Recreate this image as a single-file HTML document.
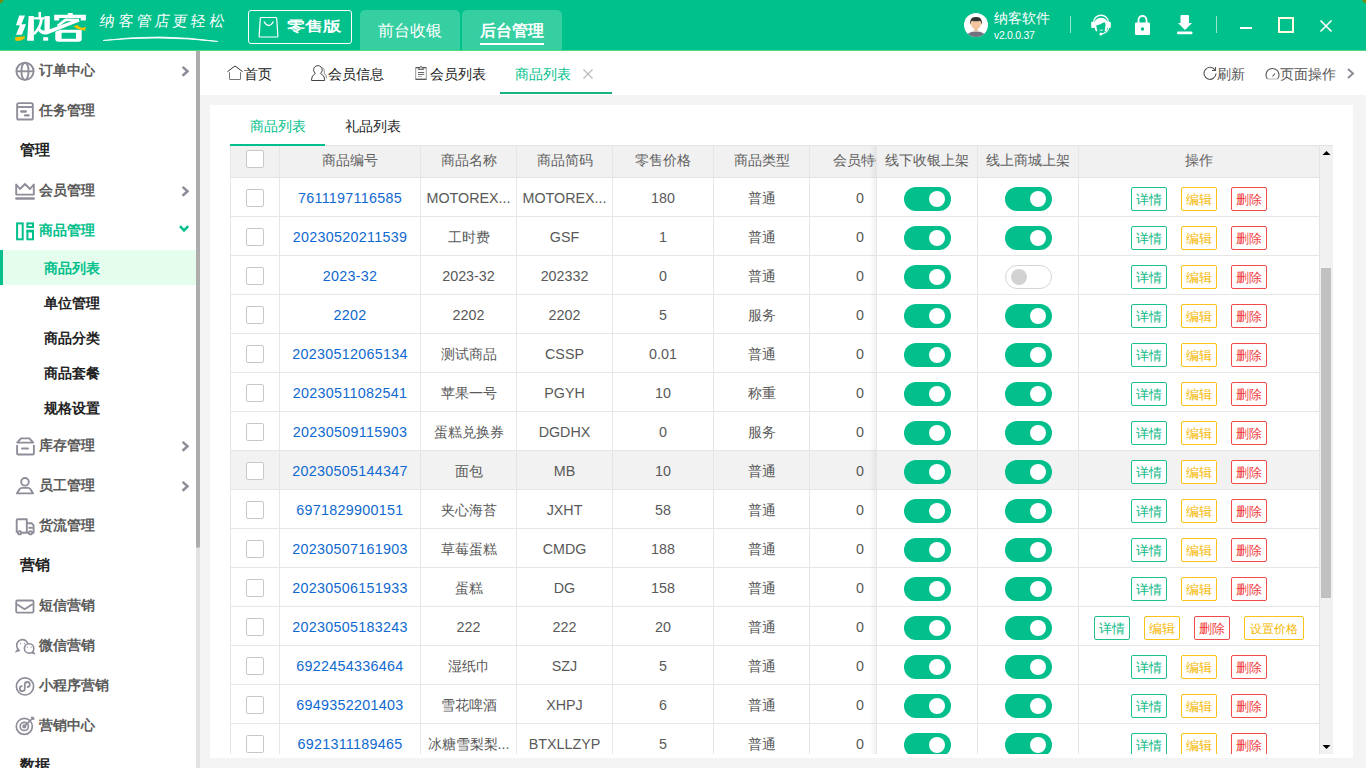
<!DOCTYPE html><html><head><meta charset="utf-8"><style>
*{box-sizing:border-box;margin:0;padding:0}
html,body{width:1366px;height:768px;overflow:hidden;background:#f4f4f4;font-family:"Liberation Sans",sans-serif;}
.abs{position:absolute}
#hdr{position:absolute;left:0;top:0;width:1366px;height:51px;background:#00c08b;border-bottom:1px solid #4ddb7e}
.ttab{position:absolute;top:10px;height:40px;width:100px;background:#35cfa1;border-radius:5px 5px 0 0;color:#fff;font-size:16px;text-align:center;line-height:42px}
#side{position:absolute;left:0;top:51px;width:196px;height:717px;background:#fff;overflow:hidden}
.mi{position:absolute;left:0;width:196px;height:40px;font-size:14px;font-weight:bold;color:#5b5b5b}
.mi .t{position:absolute;left:39px;top:0;line-height:40px}
.mi svg{position:absolute;left:15px;top:11px}
.mi .chev{position:absolute;left:179px;top:16px}
.gh{position:absolute;left:20px;width:100px;height:40px;line-height:40px;font-size:15px;font-weight:bold;color:#222}
.si{position:absolute;left:0;width:196px;height:35px;line-height:37px;font-size:14px;font-weight:bold;color:#222;padding-left:44px}
#tabbar{position:absolute;left:200px;top:51px;width:1166px;height:44px;background:#fff}
.pt{position:absolute;top:0;height:44px;line-height:46px;font-size:14px;color:#222}
#card{position:absolute;left:210px;top:105px;width:1143px;height:653px;background:#fff}
.cell{position:absolute;text-align:center;font-size:14.3px;color:#595959;white-space:nowrap;overflow:hidden}
.btn{position:absolute;height:24px;line-height:24px;font-size:12.5px;text-align:center;border:1px solid;border-radius:2px;background:#fff}
.sw{position:absolute;width:47px;height:24px;border-radius:12px;background:#02bf8b}
.sw i{position:absolute;top:4px;left:25px;width:16px;height:16px;border-radius:8px;background:#fff}
.sw.off{background:#fff;border:1px solid #d6d6d6}
.sw.off i{left:5px;top:3px;background:#d2d2d2}
.cb{position:absolute;width:18px;height:18px;border:1px solid #c8c8c8;border-radius:2px;background:#fff}
</style></head><body>

<div id="hdr">
<svg class="abs" style="left:0;top:0" width="100" height="48" viewBox="0 0 100 48">
<g fill="#fff">
<polygon points="19.2,15.4 25,15.4 21.4,24.3 26,24.3 21.9,34.7 16,34.7 19.9,25.3 16,25.3"/>
<polygon points="28.6,16.1 33.9,16.1 33.9,40.7 27.1,40.7"/>
<rect x="33.9" y="17.2" width="10.8" height="2.2"/>
<rect x="38.5" y="12" width="2.5" height="7.4"/>
<path d="M41.4,19 Q41,27.5 33.9,34" fill="none" stroke="#fff" stroke-width="2.8"/>
<rect x="44.5" y="16.1" width="5.3" height="15"/>
<rect x="43.2" y="37.2" width="5" height="3.5"/>
<path d="M37.6,29.4 Q41,35.8 47.5,34.2 L79.6,21.6 L78.6,18.6 L46.5,30.4 Q42.2,31.6 39.8,28 Z"/>
<path d="M56.8,25 L65,18.6 L79,18.8 L78.6,21.2 L66.2,21.2 L58.4,26.8 Z"/>

<rect x="67.8" y="13" width="5" height="2"/>
<path d="M54.2,14.7 H85.9 V20.4 H80.7 V17.9 H59.2 V20.4 H54.2 Z"/>
<path d="M55.3,31.8 L60.5,29.8 H81.7 V39 Q81.7,41.7 78.5,41.7 H58.5 Q55.3,41.7 55.3,39 Z M61.6,32.75 V38.7 H76 V32.75 Z" fill-rule="evenodd"/>
</g>
<g fill="#f6c000">
<path d="M15,37.2 L25.1,36.2 L24.6,38.2 Q22,40.2 19.9,40.7 L15.5,40.7 Z"/>
<path d="M73.8,26.3 Q76,25 77.7,25.3 Q80,27.6 81.7,27.8 L85.9,27.1 L85.1,30.8 L80.7,29.8 Q77,28.8 74.8,27.6 Z"/>
</g>
</svg>
<div class="abs" style="left:100px;top:12px;font-family:'Liberation Serif',serif;font-size:15px;color:#fff;letter-spacing:3.2px;transform:skewX(-8deg);white-space:nowrap">纳客管店更轻松</div>
<svg class="abs" style="left:100px;top:33px" width="125" height="12"><path d="M3,7.5 Q60,0 118,8.5 Q60,2 3,7.5z" fill="#fff" stroke="#fff" stroke-width="0.8"/></svg>
<div class="abs" style="left:248px;top:10px;width:104px;height:34px;border:1px solid #fff;border-radius:3px"></div>
<svg class="abs" style="left:258px;top:16px" width="22" height="22" viewBox="0 0 22 22"><path d="M3.2,1.5 h14.6 q0.8,0 0.9,0.8 l1.2,18 q0,0.7 -0.7,0.7 h-17.4 q-0.7,0 -0.7,-0.7 l1.2,-18 q0.1,-0.8 0.9,-0.8z" fill="none" stroke="#fff" stroke-width="1.2"/><path d="M6,5.5 q4.5,8 9.5,0" fill="none" stroke="#fff" stroke-width="1.3"/></svg>
<div class="abs" style="left:287px;top:15px;font-size:17px;font-weight:bold;color:#fff;line-height:24px;white-space:nowrap;transform:scale(1.045,0.8);transform-origin:0 50%">零售版</div>
<div class="ttab" style="left:360px">前台收银</div>
<div class="ttab" style="left:462px;font-weight:bold">后台管理<div class="abs" style="left:18px;top:33px;width:64px;height:2px;background:#fff"></div></div>
<svg class="abs" style="left:964px;top:13px" width="24" height="24" viewBox="0 0 24 24">
<circle cx="12" cy="12" r="12" fill="#fff"/>
<clipPath id="avc"><circle cx="12" cy="12" r="12"/></clipPath>
<g clip-path="url(#avc)">
<path d="M1.5,24.5 q1.5,-6 10.5,-6 q9,0 10.5,6z" fill="#72717f"/>
<rect x="10" y="14" width="4" height="4" fill="#f0c29a"/>
<ellipse cx="12" cy="10.5" rx="5" ry="5.5" fill="#f3c69f"/>
<path d="M6.3,12 q-1.2,-8.5 5.7,-8 q6.9,-0.5 5.7,8 q-0.6,-3.5 -1.6,-4.3 q-4,1 -8.3,0 q-1,1 -1.5,4.3z" fill="#333"/>
</g></svg>
<div class="abs" style="left:994px;top:9px;font-size:14px;color:#fff;line-height:18px;white-space:nowrap">纳客软件</div>
<div class="abs" style="left:994px;top:28px;font-size:10.5px;font-weight:normal;color:#fff;line-height:14px;white-space:nowrap;letter-spacing:-0.3px">v2.0.0.37</div>
<div class="abs" style="left:1070px;top:16px;width:1px;height:17px;background:rgba(255,255,255,.6)"></div>
<div class="abs" style="left:1216px;top:16px;width:1px;height:17px;background:rgba(255,255,255,.6)"></div>
<svg class="abs" style="left:1088px;top:11px" width="26" height="26" viewBox="0 0 26 26">
<path d="M5.6,11.6 A7.4,7.4 0 0 1 20.4,11.6" fill="none" stroke="#fff" stroke-width="1.4"/>
<path d="M6,14 Q6.2,7 13,6.8 Q19.8,7 20,14 L18.6,19.8 Q17.6,20.8 16.6,20.4 L17.6,13.6 Q17,11 16,11.2 Q12.5,13.6 8.2,14.4 L9.4,20.6 Q8,20.6 7.3,19.2 Z" fill="#fff"/>
<rect x="3.2" y="10.8" width="3.8" height="6.2" rx="1" fill="#fff"/>
<rect x="19" y="10.8" width="3.8" height="6.2" rx="1" fill="#fff"/>
<path d="M20.8,16.5 Q20,22 13,23" fill="none" stroke="#fff" stroke-width="1.2"/>
<circle cx="12.9" cy="23" r="1.5" fill="#fff"/>
<path d="M11.4,19 Q13,19.7 15,19" fill="none" stroke="#fff" stroke-width="0.8"/>
</svg>
<svg class="abs" style="left:1134px;top:15px" width="17" height="21" viewBox="0 0 17 21">
<path d="M4.5,8 v-3 a4,4 0 0 1 8,0 v3" fill="none" stroke="#fff" stroke-width="1.8"/>
<rect x="1" y="7.5" width="15" height="12.5" rx="1.2" fill="#fff"/>
<circle cx="8.5" cy="14" r="1.7" fill="#02bf8b"/>
</svg>
<svg class="abs" style="left:1177px;top:15px" width="16" height="20" viewBox="0 0 16 20">
<rect x="3.5" y="0" width="8.5" height="9" rx="1" fill="#fff"/>
<polygon points="1,8 15,8 8,15" fill="#fff"/>
<rect x="0" y="16.5" width="15.5" height="2.8" rx="1.2" fill="#fff"/>
</svg>
<div class="abs" style="left:1240px;top:27px;width:12px;height:2px;background:#fff"></div>
<div class="abs" style="left:1278px;top:17px;width:16px;height:16px;border:2px solid #fffbe0"></div>
<svg class="abs" style="left:1319px;top:19px" width="14" height="14"><path d="M1.5,1.5 L12.5,12.5 M12.5,1.5 L1.5,12.5" stroke="#fff" stroke-width="1.6"/></svg>
<svg class="abs" style="left:0;top:0" width="5" height="5"><polygon points="0,0 4,0 0,4" fill="#7a8a04"/></svg>
<svg class="abs" style="left:1361px;top:0" width="5" height="5"><polygon points="1,0 5,0 5,4" fill="#7a8a04"/></svg>
</div>
<div id="side">
<div class="mi" style="top:-1px"><span class="t">订单中心</span><svg width="20" height="20" viewBox="0 0 20 20" fill="none" stroke="#8e8e9a" stroke-width="1.9"><circle cx="10" cy="10.3" r="8.6"/><ellipse cx="10" cy="10.3" rx="3.6" ry="8.6"/><path d="M1.4,10.3 h17.2"/></svg><svg class="chev" width="12" height="12" viewBox="0 0 12 12"><path d="M3.6,0.9 L8.5,5.3 L3.6,9.7" fill="none" stroke="#8e8e9a" stroke-width="2.5"/></svg></div>
<div class="mi" style="top:39px"><span class="t">任务管理</span><svg width="20" height="20" viewBox="0 0 20 20" fill="none" stroke="#8e8e9a" stroke-width="1.9"><rect x="2.15" y="2.15" width="15.7" height="16.4" rx="1.6"/><path d="M2.15,6 h15.7"/><path d="M6.2,10.5 h4.6" stroke-linecap="round" stroke-width="2.3"/><path d="M10.1,14.4 h3.6" stroke-linecap="round" stroke-width="2.3"/></svg></div>
<div class="gh" style="top:79px">管理</div>
<div class="mi" style="top:119px"><span class="t">会员管理</span><svg width="21" height="20" viewBox="0 0 21 20" fill="none" stroke="#8e8e9a" stroke-width="1.9" stroke-linejoin="round"><path d="M1.2,3.5 L5,8 L10,3 L15,8 L18.8,3.5 V13.6 H1.2 Z"/><path d="M1.4,17.5 h17.4" stroke-width="2.4" stroke-linecap="round"/></svg><svg class="chev" width="12" height="12" viewBox="0 0 12 12"><path d="M3.6,0.9 L8.5,5.3 L3.6,9.7" fill="none" stroke="#8e8e9a" stroke-width="2.5"/></svg></div>
<div class="mi" style="top:159px"><span class="t" style="color:#02bf8b">商品管理</span><svg width="20" height="20" viewBox="0 0 20 20" fill="none" stroke="#02bf8b" stroke-width="2"><rect x="2.1" y="2.4" width="5.6" height="15.9"/><rect x="12.4" y="2.4" width="5.6" height="3.6"/><rect x="12.4" y="10.2" width="5.6" height="8.1"/><path d="M11.4,10 h7.6" stroke-width="2.6"/></svg><svg class="chev" style="left:178px;top:14px" width="12" height="10" viewBox="0 0 12 10"><path d="M2,2.2 L6,6.4 L10.2,2.2" fill="none" stroke="#02bf8b" stroke-width="2.5"/></svg></div>
<div class="si" style="top:199px;background:#e5fdec;color:#02bf8b"><div class="abs" style="left:0;top:0;width:3px;height:35px;background:#02bf8b"></div>商品列表</div>
<div class="si" style="top:234px">单位管理</div>
<div class="si" style="top:269px">商品分类</div>
<div class="si" style="top:304px">商品套餐</div>
<div class="si" style="top:339px">规格设置</div>
<div class="mi" style="top:374px"><span class="t">库存管理</span><svg width="20" height="20" viewBox="0 0 20 20" fill="none" stroke="#8e8e9a" stroke-width="1.9" stroke-linejoin="round"><path d="M2.2,6.6 L6,2.4 H14.4 L18.2,6.6 Z"/><path d="M2.1,9 V17.4 Q2.1,18.5 3.2,18.5 H17.8 Q18.9,18.5 18.9,17.4 V9"/><path d="M7.1,12.5 H12.9" stroke-linecap="round" stroke-width="2.2"/></svg><svg class="chev" width="12" height="12" viewBox="0 0 12 12"><path d="M3.6,0.9 L8.5,5.3 L3.6,9.7" fill="none" stroke="#8e8e9a" stroke-width="2.5"/></svg></div>
<div class="mi" style="top:414px"><span class="t">员工管理</span><svg width="20" height="20" viewBox="0 0 20 20" fill="none" stroke="#8e8e9a" stroke-width="1.9" stroke-linejoin="round"><circle cx="10" cy="5.8" r="3.8"/><path d="M1.9,17.4 L4.5,13.2 Q5.4,11.9 7,11.9 H13 Q14.6,11.9 15.5,13.2 L18.1,17.4 Z"/></svg><svg class="chev" width="12" height="12" viewBox="0 0 12 12"><path d="M3.6,0.9 L8.5,5.3 L3.6,9.7" fill="none" stroke="#8e8e9a" stroke-width="2.5"/></svg></div>
<div class="mi" style="top:454px"><span class="t">货流管理</span><svg width="21" height="20" viewBox="0 0 21 20" fill="none" stroke="#8e8e9a" stroke-width="1.9" stroke-linejoin="round"><path d="M1.7,16.7 V4.2 Q1.7,3.2 2.7,3.2 H11.8 V16.7 H2.6 M6.4,16.7 H13.7 M17.3,16.7 H18.6 V9.3 L16.8,7.3 H11.8"/><path d="M13.4,11.8 H17.8"/><circle cx="4.6" cy="16.7" r="1.6" fill="#fff"/><circle cx="15.5" cy="16.7" r="1.6" fill="#fff"/></svg></div>
<div class="gh" style="top:494px">营销</div>
<div class="mi" style="top:534px"><span class="t">短信营销</span><svg width="20" height="20" viewBox="0 0 20 20" fill="none" stroke="#8e8e9a" stroke-width="1.8" stroke-linejoin="round"><rect x="1.2" y="4.5" width="17.3" height="12.2" rx="1.2"/><path d="M1.5,8 L9.6,13.2 L17.8,8"/></svg></div>
<div class="mi" style="top:574px"><span class="t">微信营销</span><svg width="21" height="20" viewBox="0 0 21 20" fill="none" stroke="#8e8e9a" stroke-width="1.6"><path d="M3.2,13.2 A5.7,5.7 0 1 1 11.2,13.6" /><path d="M3.4,12.8 L1.6,15.2 L5,14.2"/><circle cx="14.1" cy="12.4" r="4.7" fill="#fff"/><path d="M17.8,15.2 L19,17.4 L16.2,16.6"/><path d="M5.2,7.5 h0.9 M9.1,7.5 h0.9 M11.8,11.2 h0.9 M15.7,11.2 h0.9" stroke-width="1.3"/></svg></div>
<div class="mi" style="top:614px"><span class="t">小程序营销</span><svg width="20" height="20" viewBox="0 0 20 20" fill="none" stroke="#8e8e9a" stroke-width="1.7"><circle cx="10" cy="10.4" r="8.6"/><path d="M6.8,10.2 A2.5,2.5 0 1 0 9.8,12.4 V8.6 A2.5,2.5 0 1 1 12.6,11" stroke-width="1.8" stroke-linecap="round"/></svg></div>
<div class="mi" style="top:654px"><span class="t">营销中心</span><svg width="21" height="20" viewBox="0 0 21 20" fill="none" stroke="#8e8e9a" stroke-width="1.7"><circle cx="9.3" cy="10.4" r="8"/><circle cx="9.3" cy="10.4" r="4.1"/><circle cx="9.3" cy="10.4" r="1.2" fill="#8e8e9a"/><path d="M9.3,10.4 L17,2.8"/><path d="M16.4,1 L18.4,1.2 L19.2,3.2 L17.2,3.4 Z" fill="#8e8e9a" stroke-width="1"/></svg></div>
<div class="gh" style="top:694px">数据</div>
</div>
<div class="abs" style="left:196px;top:51px;width:4px;height:717px;background:#e3e3e3"></div>
<div class="abs" style="left:196px;top:51px;width:4px;height:497px;background:#adadad;border-radius:0 0 2px 2px"></div>
<div id="tabbar">
<svg class="abs" style="left:27px;top:14px" width="17" height="16" viewBox="0 0 17 16" fill="none" stroke-width="1"><path d="M0.5,6.6 L8,1 L15.6,6.6" stroke="#333"/><path d="M2.5,7.2 V14 Q2.5,14.5 3,14.5 H13 Q13.5,14.5 13.5,14 V7.2" stroke="#777"/></svg>
<div class="pt" style="left:44px;color:#222">首页</div>
<svg class="abs" style="left:111px;top:14px" width="17" height="17" viewBox="0 0 17 17" fill="none" stroke="#444" stroke-width="1"><path d="M4.4,8.4 A4.3,4.3 0 1 1 9.4,8.4 Q13.6,10.5 13.6,14 V15.5 H0.6 V14 Q0.6,10.5 4.4,8.4 Z"/><path d="M10.6,2.2 Q14,4 13.2,8.2 Q15.5,10 15.6,13.4" stroke="#888"/></svg>
<div class="pt" style="left:128px;color:#222">会员信息</div>
<svg class="abs" style="left:214px;top:15px" width="14" height="15" viewBox="0 0 14 15" fill="none" stroke="#555" stroke-width="1"><path d="M1.7,1.7 H12.3 V13.2 H1.7 Z" stroke="#999"/><path d="M1.7,1.7 H12.3 M1.5,13.3 H12.5" stroke="#444"/><path d="M4.3,3.4 L6.2,0.7 H7.8 L9.6,3.4 Z" fill="#ddd" stroke="#555"/><path d="M4,6.5 h6.2 M4,8.4 h6.2" stroke="#666"/><path d="M4,10.4 h3.8" stroke="#aaa"/></svg>
<div class="pt" style="left:230px;color:#222">会员列表</div>
<div class="pt" style="left:315px;color:#02bf8b">商品列表</div>
<svg class="abs" style="left:383px;top:18px" width="10" height="10"><path d="M0.5,0.5 L9.5,9.5 M9.5,0.5 L0.5,9.5" stroke="#bbb" stroke-width="1.2"/></svg>
<div class="abs" style="left:300px;top:41px;width:112px;height:2px;background:#19b47b"></div>
<svg class="abs" style="left:1003px;top:15px" width="14" height="14" viewBox="0 0 14 14" fill="none" stroke="#555" stroke-width="1.1"><path d="M12,4 A6,6 0 1 0 13,7.5"/><path d="M12.5,1 V4.5 H9"/></svg>
<div class="pt" style="left:1017px;color:#555">刷新</div>
<svg class="abs" style="left:1065px;top:16px" width="15" height="14" viewBox="0 0 15 14" fill="none" stroke="#555" stroke-width="1.1"><path d="M2.4,12 A6.5,6.5 0 1 1 12.6,12" /><path d="M2.4,12 H12.6" stroke="#bbb"/><path d="M7.5,9.5 L10,6.5"/></svg>
<div class="pt" style="left:1080px;color:#555">页面操作</div>
<svg class="abs" style="left:1146px;top:17px" width="10" height="11" viewBox="0 0 10 11"><path d="M2,1 L7,5.5 L2,10" fill="none" stroke="#8e8e9a" stroke-width="2"/></svg>
</div>
<div id="card"></div>
<div class="abs" style="left:250px;top:116px;font-size:14px;color:#02bf8b;line-height:20px">商品列表</div>
<div class="abs" style="left:345px;top:116px;font-size:14px;color:#222;line-height:20px">礼品列表</div>
<div class="abs" style="left:230px;top:145px;width:1103px;height:1px;background:#e4e4e4"></div>
<div class="abs" style="left:230px;top:144px;width:95px;height:2px;background:#02bf8b"></div>
<div class="abs" style="left:230px;top:146px;width:1089px;height:608px;overflow:hidden;background:#fff">
<div class="abs" style="left:0;top:0;width:1089px;height:32px;background:#f1f1f1;border-bottom:1px solid #e3e3e3"></div>
<div class="abs" style="left:0;top:70px;width:1089px;height:1px;background:#e6e6e6"></div>
<div class="abs" style="left:0;top:109px;width:1089px;height:1px;background:#e6e6e6"></div>
<div class="abs" style="left:0;top:148px;width:1089px;height:1px;background:#e6e6e6"></div>
<div class="abs" style="left:0;top:187px;width:1089px;height:1px;background:#e6e6e6"></div>
<div class="abs" style="left:0;top:226px;width:1089px;height:1px;background:#e6e6e6"></div>
<div class="abs" style="left:0;top:265px;width:1089px;height:1px;background:#e6e6e6"></div>
<div class="abs" style="left:0;top:304px;width:1089px;height:1px;background:#e6e6e6"></div>
<div class="abs" style="left:0;top:343px;width:1089px;height:1px;background:#e6e6e6"></div>
<div class="abs" style="left:0;top:382px;width:1089px;height:1px;background:#e6e6e6"></div>
<div class="abs" style="left:0;top:421px;width:1089px;height:1px;background:#e6e6e6"></div>
<div class="abs" style="left:0;top:460px;width:1089px;height:1px;background:#e6e6e6"></div>
<div class="abs" style="left:0;top:499px;width:1089px;height:1px;background:#e6e6e6"></div>
<div class="abs" style="left:0;top:538px;width:1089px;height:1px;background:#e6e6e6"></div>
<div class="abs" style="left:0;top:577px;width:1089px;height:1px;background:#e6e6e6"></div>
<div class="abs" style="left:0;top:616px;width:1089px;height:1px;background:#e6e6e6"></div>
<div class="abs" style="left:0;top:305px;width:1089px;height:38px;background:#f2f2f2"></div>
<div class="abs" style="left:0px;top:0;width:1px;height:608px;background:#e6e6e6"></div>
<div class="abs" style="left:49px;top:0;width:1px;height:608px;background:#e6e6e6"></div>
<div class="abs" style="left:190px;top:0;width:1px;height:608px;background:#e6e6e6"></div>
<div class="abs" style="left:286px;top:0;width:1px;height:608px;background:#e6e6e6"></div>
<div class="abs" style="left:382px;top:0;width:1px;height:608px;background:#e6e6e6"></div>
<div class="abs" style="left:483px;top:0;width:1px;height:608px;background:#e6e6e6"></div>
<div class="abs" style="left:579px;top:0;width:1px;height:608px;background:#e6e6e6"></div>
<div class="abs" style="left:646px;top:0;width:1px;height:608px;background:#e6e6e6"></div>
<div class="abs" style="left:747px;top:0;width:1px;height:608px;background:#e6e6e6"></div>
<div class="abs" style="left:848px;top:0;width:1px;height:608px;background:#e6e6e6"></div>
<div class="cb" style="left:16px;top:4px"></div>
<div class="cell" style="left:50px;top:0;width:140px;line-height:29px;color:#606060">商品编号</div>
<div class="cell" style="left:191px;top:0;width:95px;line-height:29px;color:#606060">商品名称</div>
<div class="cell" style="left:287px;top:0;width:95px;line-height:29px;color:#606060">商品简码</div>
<div class="cell" style="left:383px;top:0;width:100px;line-height:29px;color:#606060">零售价格</div>
<div class="cell" style="left:484px;top:0;width:95px;line-height:29px;color:#606060">商品类型</div>
<div class="cell" style="left:603px;top:0;width:70px;line-height:29px;color:#606060;text-align:left">会员特价</div>
<div class="cb" style="left:16px;top:43px"></div>
<div class="cell" style="left:50px;top:32px;width:140px;line-height:40px;color:#0f69d0;letter-spacing:0.3px;">7611197116585</div>
<div class="cell" style="left:191px;top:32px;width:95px;line-height:40px;color:#595959;">MOTOREX...</div>
<div class="cell" style="left:287px;top:32px;width:95px;line-height:40px;color:#595959;">MOTOREX...</div>
<div class="cell" style="left:383px;top:32px;width:100px;line-height:40px;color:#595959;">180</div>
<div class="cell" style="left:484px;top:32px;width:95px;line-height:40px;color:#595959;">普通</div>
<div class="cell" style="left:614px;top:32px;width:20px;line-height:40px;text-align:right">0</div>
<div class="cb" style="left:16px;top:82px"></div>
<div class="cell" style="left:50px;top:71px;width:140px;line-height:40px;color:#0f69d0;letter-spacing:0.3px;">20230520211539</div>
<div class="cell" style="left:191px;top:71px;width:95px;line-height:40px;color:#595959;">工时费</div>
<div class="cell" style="left:287px;top:71px;width:95px;line-height:40px;color:#595959;">GSF</div>
<div class="cell" style="left:383px;top:71px;width:100px;line-height:40px;color:#595959;">1</div>
<div class="cell" style="left:484px;top:71px;width:95px;line-height:40px;color:#595959;">普通</div>
<div class="cell" style="left:614px;top:71px;width:20px;line-height:40px;text-align:right">0</div>
<div class="cb" style="left:16px;top:121px"></div>
<div class="cell" style="left:50px;top:110px;width:140px;line-height:40px;color:#0f69d0;letter-spacing:0.3px;">2023-32</div>
<div class="cell" style="left:191px;top:110px;width:95px;line-height:40px;color:#595959;">2023-32</div>
<div class="cell" style="left:287px;top:110px;width:95px;line-height:40px;color:#595959;">202332</div>
<div class="cell" style="left:383px;top:110px;width:100px;line-height:40px;color:#595959;">0</div>
<div class="cell" style="left:484px;top:110px;width:95px;line-height:40px;color:#595959;">普通</div>
<div class="cell" style="left:614px;top:110px;width:20px;line-height:40px;text-align:right">0</div>
<div class="cb" style="left:16px;top:160px"></div>
<div class="cell" style="left:50px;top:149px;width:140px;line-height:40px;color:#0f69d0;letter-spacing:0.3px;">2202</div>
<div class="cell" style="left:191px;top:149px;width:95px;line-height:40px;color:#595959;">2202</div>
<div class="cell" style="left:287px;top:149px;width:95px;line-height:40px;color:#595959;">2202</div>
<div class="cell" style="left:383px;top:149px;width:100px;line-height:40px;color:#595959;">5</div>
<div class="cell" style="left:484px;top:149px;width:95px;line-height:40px;color:#595959;">服务</div>
<div class="cell" style="left:614px;top:149px;width:20px;line-height:40px;text-align:right">0</div>
<div class="cb" style="left:16px;top:199px"></div>
<div class="cell" style="left:50px;top:188px;width:140px;line-height:40px;color:#0f69d0;letter-spacing:0.3px;">20230512065134</div>
<div class="cell" style="left:191px;top:188px;width:95px;line-height:40px;color:#595959;">测试商品</div>
<div class="cell" style="left:287px;top:188px;width:95px;line-height:40px;color:#595959;">CSSP</div>
<div class="cell" style="left:383px;top:188px;width:100px;line-height:40px;color:#595959;">0.01</div>
<div class="cell" style="left:484px;top:188px;width:95px;line-height:40px;color:#595959;">普通</div>
<div class="cell" style="left:614px;top:188px;width:20px;line-height:40px;text-align:right">0</div>
<div class="cb" style="left:16px;top:238px"></div>
<div class="cell" style="left:50px;top:227px;width:140px;line-height:40px;color:#0f69d0;letter-spacing:0.3px;">20230511082541</div>
<div class="cell" style="left:191px;top:227px;width:95px;line-height:40px;color:#595959;">苹果一号</div>
<div class="cell" style="left:287px;top:227px;width:95px;line-height:40px;color:#595959;">PGYH</div>
<div class="cell" style="left:383px;top:227px;width:100px;line-height:40px;color:#595959;">10</div>
<div class="cell" style="left:484px;top:227px;width:95px;line-height:40px;color:#595959;">称重</div>
<div class="cell" style="left:614px;top:227px;width:20px;line-height:40px;text-align:right">0</div>
<div class="cb" style="left:16px;top:277px"></div>
<div class="cell" style="left:50px;top:266px;width:140px;line-height:40px;color:#0f69d0;letter-spacing:0.3px;">20230509115903</div>
<div class="cell" style="left:191px;top:266px;width:95px;line-height:40px;color:#595959;">蛋糕兑换券</div>
<div class="cell" style="left:287px;top:266px;width:95px;line-height:40px;color:#595959;">DGDHX</div>
<div class="cell" style="left:383px;top:266px;width:100px;line-height:40px;color:#595959;">0</div>
<div class="cell" style="left:484px;top:266px;width:95px;line-height:40px;color:#595959;">服务</div>
<div class="cell" style="left:614px;top:266px;width:20px;line-height:40px;text-align:right">0</div>
<div class="cb" style="left:16px;top:316px"></div>
<div class="cell" style="left:50px;top:305px;width:140px;line-height:40px;color:#0f69d0;letter-spacing:0.3px;">20230505144347</div>
<div class="cell" style="left:191px;top:305px;width:95px;line-height:40px;color:#595959;">面包</div>
<div class="cell" style="left:287px;top:305px;width:95px;line-height:40px;color:#595959;">MB</div>
<div class="cell" style="left:383px;top:305px;width:100px;line-height:40px;color:#595959;">10</div>
<div class="cell" style="left:484px;top:305px;width:95px;line-height:40px;color:#595959;">普通</div>
<div class="cell" style="left:614px;top:305px;width:20px;line-height:40px;text-align:right">0</div>
<div class="cb" style="left:16px;top:355px"></div>
<div class="cell" style="left:50px;top:344px;width:140px;line-height:40px;color:#0f69d0;letter-spacing:0.3px;">6971829900151</div>
<div class="cell" style="left:191px;top:344px;width:95px;line-height:40px;color:#595959;">夹心海苔</div>
<div class="cell" style="left:287px;top:344px;width:95px;line-height:40px;color:#595959;">JXHT</div>
<div class="cell" style="left:383px;top:344px;width:100px;line-height:40px;color:#595959;">58</div>
<div class="cell" style="left:484px;top:344px;width:95px;line-height:40px;color:#595959;">普通</div>
<div class="cell" style="left:614px;top:344px;width:20px;line-height:40px;text-align:right">0</div>
<div class="cb" style="left:16px;top:394px"></div>
<div class="cell" style="left:50px;top:383px;width:140px;line-height:40px;color:#0f69d0;letter-spacing:0.3px;">20230507161903</div>
<div class="cell" style="left:191px;top:383px;width:95px;line-height:40px;color:#595959;">草莓蛋糕</div>
<div class="cell" style="left:287px;top:383px;width:95px;line-height:40px;color:#595959;">CMDG</div>
<div class="cell" style="left:383px;top:383px;width:100px;line-height:40px;color:#595959;">188</div>
<div class="cell" style="left:484px;top:383px;width:95px;line-height:40px;color:#595959;">普通</div>
<div class="cell" style="left:614px;top:383px;width:20px;line-height:40px;text-align:right">0</div>
<div class="cb" style="left:16px;top:433px"></div>
<div class="cell" style="left:50px;top:422px;width:140px;line-height:40px;color:#0f69d0;letter-spacing:0.3px;">20230506151933</div>
<div class="cell" style="left:191px;top:422px;width:95px;line-height:40px;color:#595959;">蛋糕</div>
<div class="cell" style="left:287px;top:422px;width:95px;line-height:40px;color:#595959;">DG</div>
<div class="cell" style="left:383px;top:422px;width:100px;line-height:40px;color:#595959;">158</div>
<div class="cell" style="left:484px;top:422px;width:95px;line-height:40px;color:#595959;">普通</div>
<div class="cell" style="left:614px;top:422px;width:20px;line-height:40px;text-align:right">0</div>
<div class="cb" style="left:16px;top:472px"></div>
<div class="cell" style="left:50px;top:461px;width:140px;line-height:40px;color:#0f69d0;letter-spacing:0.3px;">20230505183243</div>
<div class="cell" style="left:191px;top:461px;width:95px;line-height:40px;color:#595959;">222</div>
<div class="cell" style="left:287px;top:461px;width:95px;line-height:40px;color:#595959;">222</div>
<div class="cell" style="left:383px;top:461px;width:100px;line-height:40px;color:#595959;">20</div>
<div class="cell" style="left:484px;top:461px;width:95px;line-height:40px;color:#595959;">普通</div>
<div class="cell" style="left:614px;top:461px;width:20px;line-height:40px;text-align:right">0</div>
<div class="cb" style="left:16px;top:511px"></div>
<div class="cell" style="left:50px;top:500px;width:140px;line-height:40px;color:#0f69d0;letter-spacing:0.3px;">6922454336464</div>
<div class="cell" style="left:191px;top:500px;width:95px;line-height:40px;color:#595959;">湿纸巾</div>
<div class="cell" style="left:287px;top:500px;width:95px;line-height:40px;color:#595959;">SZJ</div>
<div class="cell" style="left:383px;top:500px;width:100px;line-height:40px;color:#595959;">5</div>
<div class="cell" style="left:484px;top:500px;width:95px;line-height:40px;color:#595959;">普通</div>
<div class="cell" style="left:614px;top:500px;width:20px;line-height:40px;text-align:right">0</div>
<div class="cb" style="left:16px;top:550px"></div>
<div class="cell" style="left:50px;top:539px;width:140px;line-height:40px;color:#0f69d0;letter-spacing:0.3px;">6949352201403</div>
<div class="cell" style="left:191px;top:539px;width:95px;line-height:40px;color:#595959;">雪花啤酒</div>
<div class="cell" style="left:287px;top:539px;width:95px;line-height:40px;color:#595959;">XHPJ</div>
<div class="cell" style="left:383px;top:539px;width:100px;line-height:40px;color:#595959;">6</div>
<div class="cell" style="left:484px;top:539px;width:95px;line-height:40px;color:#595959;">普通</div>
<div class="cell" style="left:614px;top:539px;width:20px;line-height:40px;text-align:right">0</div>
<div class="cb" style="left:16px;top:589px"></div>
<div class="cell" style="left:50px;top:578px;width:140px;line-height:40px;color:#0f69d0;letter-spacing:0.3px;">6921311189465</div>
<div class="cell" style="left:191px;top:578px;width:95px;line-height:40px;color:#595959;">冰糖雪梨梨...</div>
<div class="cell" style="left:287px;top:578px;width:95px;line-height:40px;color:#595959;">BTXLLZYP</div>
<div class="cell" style="left:383px;top:578px;width:100px;line-height:40px;color:#595959;">5</div>
<div class="cell" style="left:484px;top:578px;width:95px;line-height:40px;color:#595959;">普通</div>
<div class="cell" style="left:614px;top:578px;width:20px;line-height:40px;text-align:right">0</div>
<div class="abs" style="left:640px;top:0;width:6px;height:608px;background:linear-gradient(to left,rgba(0,0,0,.055),rgba(0,0,0,0))"></div>
<div class="abs" style="left:646px;top:0;width:443px;height:608px;background:#fff">
<div class="abs" style="left:0;top:0;width:443px;height:32px;background:#f1f1f1;border-bottom:1px solid #e3e3e3"></div>
<div class="abs" style="left:0;top:305px;width:443px;height:38px;background:#f2f2f2"></div>
<div class="abs" style="left:0;top:70px;width:443px;height:1px;background:#e6e6e6"></div>
<div class="abs" style="left:0;top:109px;width:443px;height:1px;background:#e6e6e6"></div>
<div class="abs" style="left:0;top:148px;width:443px;height:1px;background:#e6e6e6"></div>
<div class="abs" style="left:0;top:187px;width:443px;height:1px;background:#e6e6e6"></div>
<div class="abs" style="left:0;top:226px;width:443px;height:1px;background:#e6e6e6"></div>
<div class="abs" style="left:0;top:265px;width:443px;height:1px;background:#e6e6e6"></div>
<div class="abs" style="left:0;top:304px;width:443px;height:1px;background:#e6e6e6"></div>
<div class="abs" style="left:0;top:343px;width:443px;height:1px;background:#e6e6e6"></div>
<div class="abs" style="left:0;top:382px;width:443px;height:1px;background:#e6e6e6"></div>
<div class="abs" style="left:0;top:421px;width:443px;height:1px;background:#e6e6e6"></div>
<div class="abs" style="left:0;top:460px;width:443px;height:1px;background:#e6e6e6"></div>
<div class="abs" style="left:0;top:499px;width:443px;height:1px;background:#e6e6e6"></div>
<div class="abs" style="left:0;top:538px;width:443px;height:1px;background:#e6e6e6"></div>
<div class="abs" style="left:0;top:577px;width:443px;height:1px;background:#e6e6e6"></div>
<div class="abs" style="left:0;top:616px;width:443px;height:1px;background:#e6e6e6"></div>
<div class="abs" style="left:0px;top:0;width:1px;height:608px;background:#e6e6e6"></div>
<div class="abs" style="left:101px;top:0;width:1px;height:608px;background:#e6e6e6"></div>
<div class="abs" style="left:202px;top:0;width:1px;height:608px;background:#e6e6e6"></div>
<div class="cell" style="left:1px;top:0;width:100px;line-height:29px;color:#606060">线下收银上架</div>
<div class="cell" style="left:102px;top:0;width:100px;line-height:29px;color:#606060">线上商城上架</div>
<div class="cell" style="left:203px;top:0;width:240px;line-height:29px;color:#606060">操作</div>
<div class="sw" style="left:28px;top:41px"><i></i></div>
<div class="sw" style="left:129px;top:41px"><i></i></div>
<div class="btn" style="left:255px;top:41px;width:36px;color:#0cb885;border-color:#1ec08f">详情</div>
<div class="btn" style="left:305px;top:41px;width:36px;color:#f5b800;border-color:#fbc21c">编辑</div>
<div class="btn" style="left:355px;top:41px;width:36px;color:#f23a3a;border-color:#f04a4a">删除</div>
<div class="sw" style="left:28px;top:80px"><i></i></div>
<div class="sw" style="left:129px;top:80px"><i></i></div>
<div class="btn" style="left:255px;top:80px;width:36px;color:#0cb885;border-color:#1ec08f">详情</div>
<div class="btn" style="left:305px;top:80px;width:36px;color:#f5b800;border-color:#fbc21c">编辑</div>
<div class="btn" style="left:355px;top:80px;width:36px;color:#f23a3a;border-color:#f04a4a">删除</div>
<div class="sw" style="left:28px;top:119px"><i></i></div>
<div class="sw off" style="left:129px;top:119px"><i></i></div>
<div class="btn" style="left:255px;top:119px;width:36px;color:#0cb885;border-color:#1ec08f">详情</div>
<div class="btn" style="left:305px;top:119px;width:36px;color:#f5b800;border-color:#fbc21c">编辑</div>
<div class="btn" style="left:355px;top:119px;width:36px;color:#f23a3a;border-color:#f04a4a">删除</div>
<div class="sw" style="left:28px;top:158px"><i></i></div>
<div class="sw" style="left:129px;top:158px"><i></i></div>
<div class="btn" style="left:255px;top:158px;width:36px;color:#0cb885;border-color:#1ec08f">详情</div>
<div class="btn" style="left:305px;top:158px;width:36px;color:#f5b800;border-color:#fbc21c">编辑</div>
<div class="btn" style="left:355px;top:158px;width:36px;color:#f23a3a;border-color:#f04a4a">删除</div>
<div class="sw" style="left:28px;top:197px"><i></i></div>
<div class="sw" style="left:129px;top:197px"><i></i></div>
<div class="btn" style="left:255px;top:197px;width:36px;color:#0cb885;border-color:#1ec08f">详情</div>
<div class="btn" style="left:305px;top:197px;width:36px;color:#f5b800;border-color:#fbc21c">编辑</div>
<div class="btn" style="left:355px;top:197px;width:36px;color:#f23a3a;border-color:#f04a4a">删除</div>
<div class="sw" style="left:28px;top:236px"><i></i></div>
<div class="sw" style="left:129px;top:236px"><i></i></div>
<div class="btn" style="left:255px;top:236px;width:36px;color:#0cb885;border-color:#1ec08f">详情</div>
<div class="btn" style="left:305px;top:236px;width:36px;color:#f5b800;border-color:#fbc21c">编辑</div>
<div class="btn" style="left:355px;top:236px;width:36px;color:#f23a3a;border-color:#f04a4a">删除</div>
<div class="sw" style="left:28px;top:275px"><i></i></div>
<div class="sw" style="left:129px;top:275px"><i></i></div>
<div class="btn" style="left:255px;top:275px;width:36px;color:#0cb885;border-color:#1ec08f">详情</div>
<div class="btn" style="left:305px;top:275px;width:36px;color:#f5b800;border-color:#fbc21c">编辑</div>
<div class="btn" style="left:355px;top:275px;width:36px;color:#f23a3a;border-color:#f04a4a">删除</div>
<div class="sw" style="left:28px;top:314px"><i></i></div>
<div class="sw" style="left:129px;top:314px"><i></i></div>
<div class="btn" style="left:255px;top:314px;width:36px;color:#0cb885;border-color:#1ec08f">详情</div>
<div class="btn" style="left:305px;top:314px;width:36px;color:#f5b800;border-color:#fbc21c">编辑</div>
<div class="btn" style="left:355px;top:314px;width:36px;color:#f23a3a;border-color:#f04a4a">删除</div>
<div class="sw" style="left:28px;top:353px"><i></i></div>
<div class="sw" style="left:129px;top:353px"><i></i></div>
<div class="btn" style="left:255px;top:353px;width:36px;color:#0cb885;border-color:#1ec08f">详情</div>
<div class="btn" style="left:305px;top:353px;width:36px;color:#f5b800;border-color:#fbc21c">编辑</div>
<div class="btn" style="left:355px;top:353px;width:36px;color:#f23a3a;border-color:#f04a4a">删除</div>
<div class="sw" style="left:28px;top:392px"><i></i></div>
<div class="sw" style="left:129px;top:392px"><i></i></div>
<div class="btn" style="left:255px;top:392px;width:36px;color:#0cb885;border-color:#1ec08f">详情</div>
<div class="btn" style="left:305px;top:392px;width:36px;color:#f5b800;border-color:#fbc21c">编辑</div>
<div class="btn" style="left:355px;top:392px;width:36px;color:#f23a3a;border-color:#f04a4a">删除</div>
<div class="sw" style="left:28px;top:431px"><i></i></div>
<div class="sw" style="left:129px;top:431px"><i></i></div>
<div class="btn" style="left:255px;top:431px;width:36px;color:#0cb885;border-color:#1ec08f">详情</div>
<div class="btn" style="left:305px;top:431px;width:36px;color:#f5b800;border-color:#fbc21c">编辑</div>
<div class="btn" style="left:355px;top:431px;width:36px;color:#f23a3a;border-color:#f04a4a">删除</div>
<div class="sw" style="left:28px;top:470px"><i></i></div>
<div class="sw" style="left:129px;top:470px"><i></i></div>
<div class="btn" style="left:218px;top:470px;width:36px;color:#0cb885;border-color:#1ec08f">详情</div>
<div class="btn" style="left:268px;top:470px;width:36px;color:#f5b800;border-color:#fbc21c">编辑</div>
<div class="btn" style="left:318px;top:470px;width:36px;color:#f23a3a;border-color:#f04a4a">删除</div>
<div class="btn" style="left:368px;top:470px;width:60px;color:#f5b800;border-color:#fbc21c;font-size:12px">设置价格</div>
<div class="sw" style="left:28px;top:509px"><i></i></div>
<div class="sw" style="left:129px;top:509px"><i></i></div>
<div class="btn" style="left:255px;top:509px;width:36px;color:#0cb885;border-color:#1ec08f">详情</div>
<div class="btn" style="left:305px;top:509px;width:36px;color:#f5b800;border-color:#fbc21c">编辑</div>
<div class="btn" style="left:355px;top:509px;width:36px;color:#f23a3a;border-color:#f04a4a">删除</div>
<div class="sw" style="left:28px;top:548px"><i></i></div>
<div class="sw" style="left:129px;top:548px"><i></i></div>
<div class="btn" style="left:255px;top:548px;width:36px;color:#0cb885;border-color:#1ec08f">详情</div>
<div class="btn" style="left:305px;top:548px;width:36px;color:#f5b800;border-color:#fbc21c">编辑</div>
<div class="btn" style="left:355px;top:548px;width:36px;color:#f23a3a;border-color:#f04a4a">删除</div>
<div class="sw" style="left:28px;top:587px"><i></i></div>
<div class="sw" style="left:129px;top:587px"><i></i></div>
<div class="btn" style="left:255px;top:587px;width:36px;color:#0cb885;border-color:#1ec08f">详情</div>
<div class="btn" style="left:305px;top:587px;width:36px;color:#f5b800;border-color:#fbc21c">编辑</div>
<div class="btn" style="left:355px;top:587px;width:36px;color:#f23a3a;border-color:#f04a4a">删除</div>
</div>
</div>
<div class="abs" style="left:1319px;top:146px;width:14px;height:608px;background:#f1f1f1;border-left:1px solid #e3e3e3"></div>
<div class="abs" style="left:1321px;top:268px;width:10px;height:330px;background:#c1c1c1"></div>
<svg class="abs" style="left:1320px;top:148px" width="13" height="10"><polygon points="2.5,7 10.5,7 6.5,3" fill="#000"/></svg>
<svg class="abs" style="left:1320px;top:742px" width="13" height="10"><polygon points="2.5,3 10.5,3 6.5,7" fill="#000"/></svg>
</body></html>
